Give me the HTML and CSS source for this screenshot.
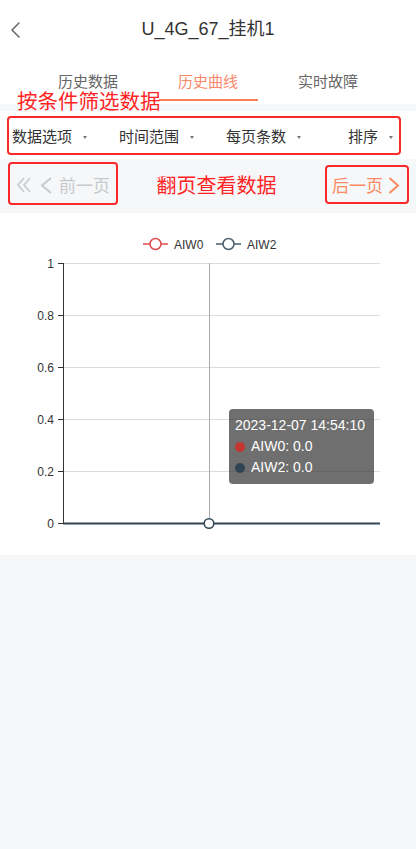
FILE: index.html
```html
<!DOCTYPE html>
<html lang="zh-CN">
<head>
<meta charset="utf-8">
<title>U_4G_67_挂机1</title>
<link rel="stylesheet" href="styles.css">
</head>
<body>
<header class="navbar">
  <span class="nav-back">
    <svg width="12" height="18" viewBox="0 0 12 18"><polyline points="9,2 2,9 9,16" fill="none" stroke="#666" stroke-width="1.5" stroke-linecap="round" stroke-linejoin="round"/></svg>
  </span>
  <h1 class="nav-title">U_4G_67_挂机1</h1>
  <span class="nav-side"></span>
</header>

<nav class="tabs">
  <span class="tab">历史数据</span>
  <span class="tab tab-active">历史曲线</span>
  <span class="tab">实时故障</span>
  <span class="note note-filter">按条件筛选数据</span>
</nav>

<section class="filter-wrap">
  <div class="filter-box">
    <span class="filter-item">数据选项<i class="caret"></i></span>
    <span class="filter-item">时间范围<i class="caret"></i></span>
    <span class="filter-item">每页条数<i class="caret"></i></span>
    <span class="filter-item">排序<i class="caret"></i></span>
  </div>
</section>

<section class="pager">
  <div class="pager-btn pager-prev">
    <svg class="ico-first" width="16" height="16" viewBox="0 0 16 16"><polyline points="8,1 2,8 8,15" fill="none" stroke="#c8c9cc" stroke-width="1.6"/><polyline points="14,1 8,8 14,15" fill="none" stroke="#c8c9cc" stroke-width="1.6"/></svg>
    <svg class="ico-prev" width="13" height="17" viewBox="0 0 13 17"><polyline points="11,1 2,8.5 11,16" fill="none" stroke="#c8c9cc" stroke-width="2"/></svg>
    <span>前一页</span>
  </div>
  <span class="note note-pager">翻页查看数据</span>
  <div class="pager-btn pager-next">
    <span>后一页</span>
    <svg class="ico-next" width="12" height="17" viewBox="0 0 12 17"><polyline points="1.5,1 10,8.5 1.5,16" fill="none" stroke="#f98a62" stroke-width="2"/></svg>
  </div>
</section>

<section class="chart">
  <svg class="chart-svg" width="416" height="342" viewBox="0 0 416 342">
    <g class="legend" font-family="Liberation Sans, Arial, sans-serif" font-size="12" fill="#333">
      <line x1="143" y1="31" x2="168" y2="31" stroke="#dd4b4b" stroke-width="1.5"/>
      <circle cx="155.5" cy="31" r="5.5" fill="#fff" stroke="#dd4b4b" stroke-width="1.5"/>
      <text x="174" y="35.5">AIW0</text>
      <line x1="216" y1="31" x2="241" y2="31" stroke="#4a5d6c" stroke-width="1.5"/>
      <circle cx="228.5" cy="31" r="5.5" fill="#fff" stroke="#4a5d6c" stroke-width="1.5"/>
      <text x="247" y="35.5">AIW2</text>
    </g>
    <g stroke="#dcdcdc" stroke-width="1">
      <line x1="63" y1="50.5" x2="380" y2="50.5"/>
      <line x1="63" y1="102.5" x2="380" y2="102.5"/>
      <line x1="63" y1="154.5" x2="380" y2="154.5"/>
      <line x1="63" y1="206.5" x2="380" y2="206.5"/>
      <line x1="63" y1="258.5" x2="380" y2="258.5"/>
    </g>
    <g stroke="#333" stroke-width="1">
      <line x1="63.5" y1="50" x2="63.5" y2="311"/>
      <line x1="58" y1="50.5" x2="63" y2="50.5"/>
      <line x1="58" y1="102.5" x2="63" y2="102.5"/>
      <line x1="58" y1="154.5" x2="63" y2="154.5"/>
      <line x1="58" y1="206.5" x2="63" y2="206.5"/>
      <line x1="58" y1="258.5" x2="63" y2="258.5"/>
      <line x1="58" y1="310.5" x2="63" y2="310.5"/>
    </g>
    <g font-family="Liberation Sans, Arial, sans-serif" font-size="12" fill="#333" text-anchor="end">
      <text x="54" y="54.5">1</text>
      <text x="54" y="106.5">0.8</text>
      <text x="54" y="158.5">0.6</text>
      <text x="54" y="210.5">0.4</text>
      <text x="54" y="262.5">0.2</text>
      <text x="54" y="314.5">0</text>
    </g>
    <line x1="209.5" y1="50" x2="209.5" y2="310" stroke="#aaa" stroke-width="1"/>
    <line x1="63" y1="310.5" x2="380" y2="310.5" stroke="#2f4554" stroke-width="2"/>
    <circle cx="209" cy="310.5" r="4.8" fill="#fff" stroke="#2f4554" stroke-width="1.5"/>
  </svg>
  <div class="tooltip">
    <div class="tip-line">2023-12-07 14:54:10</div>
    <div class="tip-line"><i class="dot dot-red"></i>AIW0: 0.0</div>
    <div class="tip-line"><i class="dot dot-dark"></i>AIW2: 0.0</div>
  </div>
</section>
</body>
</html>
```

FILE: styles.css
```css
* { box-sizing: border-box; }

html, body {
  margin: 0;
  padding: 0;
}

body {
  width: 416px;
  min-height: 849px;
  background: #f6f7f9;
  font-family: "Liberation Sans", "Noto Sans CJK SC", Arial, sans-serif;
  color: #333;
}

.navbar {
  height: 58px;
  background: #fff;
  display: grid;
  grid-template-columns: 40px 1fr 40px;
  align-items: center;
}

.nav-back {
  display: flex;
  align-items: center;
  padding-left: 10px;
  padding-top: 1px;
}

.nav-title {
  margin: 0;
  text-align: center;
  font-size: 18px;
  font-weight: normal;
  color: #333;
  line-height: 24px;
}

.tabs {
  position: relative;
  height: 46px;
  background: #fff;
  display: flex;
  justify-content: center;
  align-items: center;
}

.tab {
  position: relative;
  width: 120px;
  text-align: center;
  font-size: 15px;
  line-height: 16px;
  color: #666;
  font-family: "Noto Sans CJK SC", sans-serif;
  padding-bottom: 1px;
}

.tab-active {
  color: #f8876a;
}

.tab-active::after {
  content: "";
  position: absolute;
  left: 11px;
  right: 10px;
  top: 26.5px;
  height: 1.5px;
  background: #f6805c;
}

.note {
  color: #ff2424;
  font-family: "Noto Sans CJK SC", sans-serif;
  white-space: nowrap;
}

.note-filter {
  position: absolute;
  left: 17px;
  top: 32px;
  font-size: 20.5px;
  line-height: 20px;
}

.filter-wrap {
  margin-top: 7px;
  height: 48px;
  background: #fff;
  padding: 5px 15px 4px 7px;
}

.filter-box {
  height: 39px;
  border: 2px solid #fb2a2a;
  border-radius: 4px;
  display: grid;
  grid-template-columns: 107px 107px 122px 1fr;
  align-items: center;
  padding-left: 3px;
  padding-top: 1px;
}

.filter-item {
  display: flex;
  align-items: center;
  font-family: "Noto Sans CJK SC", sans-serif;
  font-size: 15px;
  line-height: 20px;
  color: #333;
}

.caret {
  display: inline-block;
  width: 0;
  height: 0;
  margin-left: 11px;
  margin-top: 3px;
  border-left: 2.5px solid transparent;
  border-right: 2.5px solid transparent;
  border-top: 3px solid #777;
}

.pager {
  height: 54px;
  display: flex;
  justify-content: space-between;
  align-items: flex-start;
  padding: 3px 7px 0 8px;
}

.pager-btn {
  display: flex;
  align-items: center;
  border: 2px solid #fb2a2a;
  border-radius: 4px;
  font-family: "Noto Sans CJK SC", sans-serif;
  font-size: 17px;
  line-height: 20px;
}

.pager-prev {
  width: 110px;
  height: 43px;
  padding: 3px 0 0 6px;
  color: #c8c9cc;
}

.ico-first { margin-right: 8px; }
.ico-prev { margin-right: 6px; }

.note-pager {
  font-size: 20px;
  line-height: 22px;
  margin-top: 12px;
  margin-left: 0;
  margin-right: 10px;
}

.pager-next {
  width: 84px;
  height: 39px;
  margin-top: 3px;
  padding: 1px 0 0 5px;
  color: #f98a62;
}

.ico-next { margin-left: 5px; }

.chart {
  position: relative;
  height: 342px;
  background: #fff;
}

.chart-svg {
  display: block;
}

.tooltip {
  position: absolute;
  left: 229px;
  top: 196px;
  width: 145px;
  height: 75px;
  padding: 6px 6px;
  background: rgba(50, 50, 50, 0.7);
  border-radius: 4px;
  color: #fff;
  font-family: "Liberation Sans", Arial, sans-serif;
  font-size: 14px;
  line-height: 21px;
}

.tip-line {
  display: flex;
  align-items: center;
  white-space: nowrap;
}

.dot {
  display: inline-block;
  width: 10px;
  height: 10px;
  border-radius: 50%;
  margin-right: 6px;
}

.dot-red { background: #c23531; }
.dot-dark { background: #2f4554; }
```
